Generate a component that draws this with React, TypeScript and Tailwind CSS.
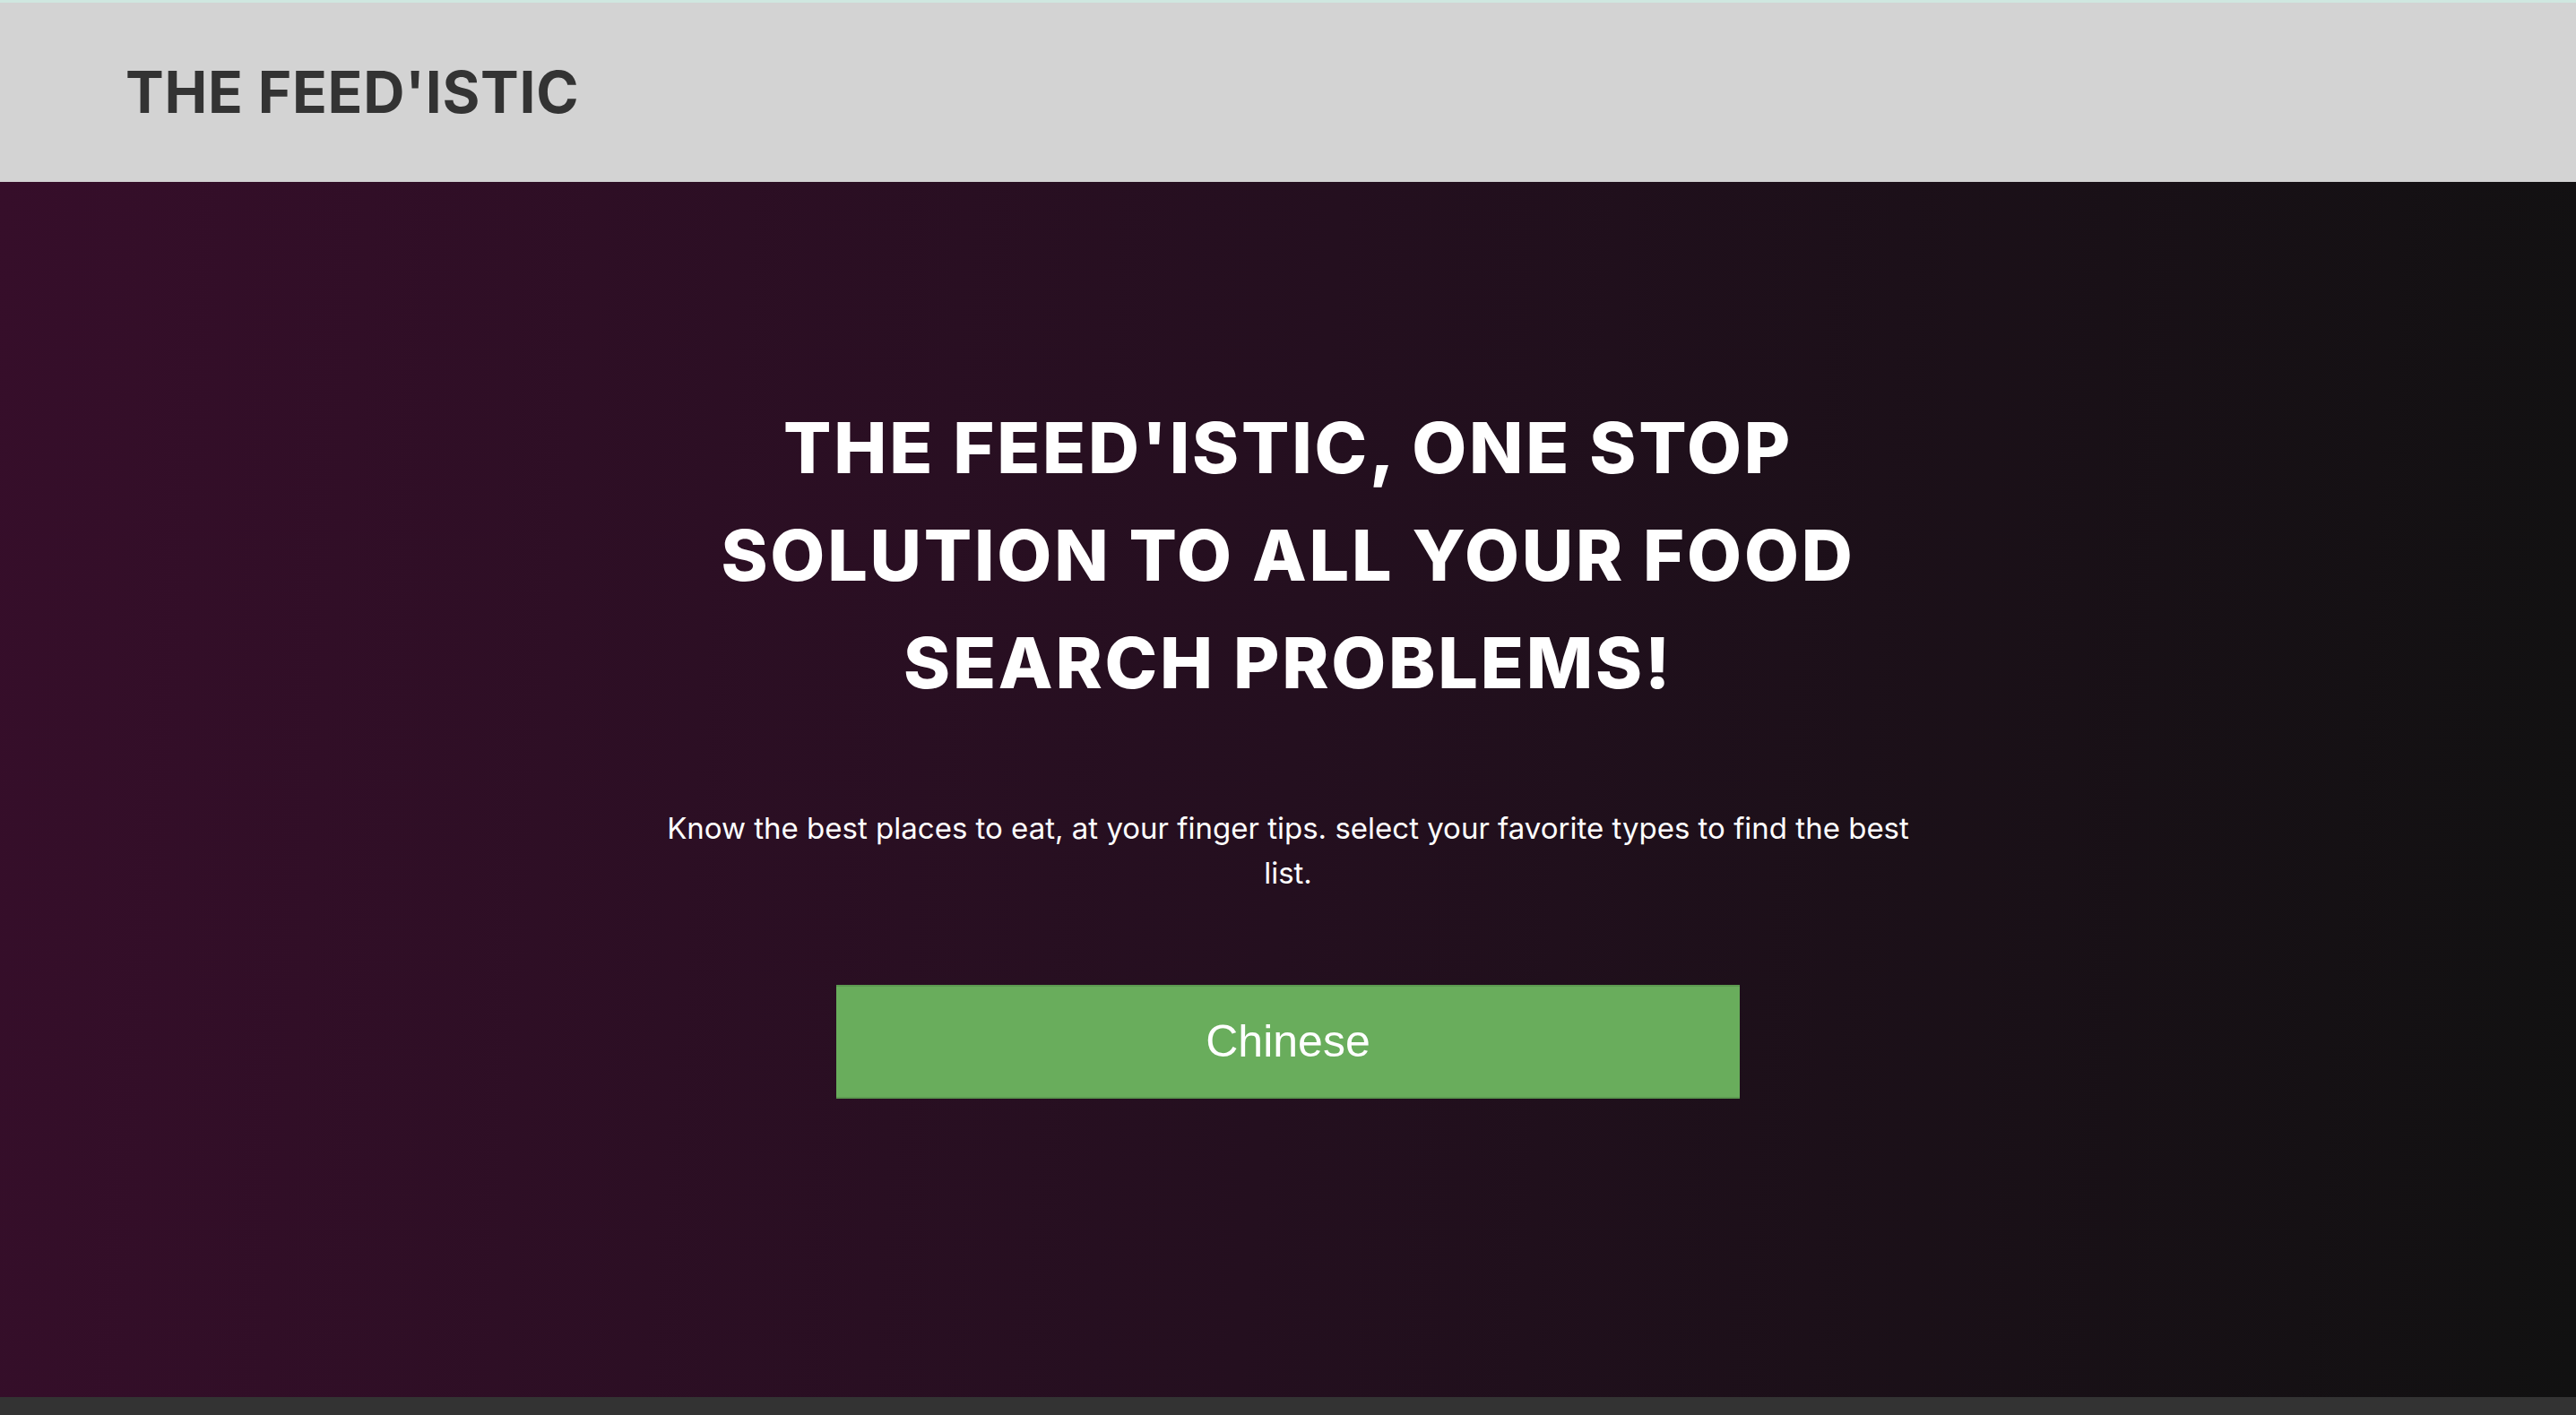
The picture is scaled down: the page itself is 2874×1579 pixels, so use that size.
import React from "react";

export default function App() {
  return (
    <div className="flex min-h-screen flex-col bg-[#333333] font-['Inter',sans-serif]">
      <header className="flex h-[203px] items-center border-t-[3px] border-[#cfe7e0] bg-[#d3d3d3] px-[140px]">
        <h1 className="text-[64px] font-bold tracking-[0.012em] text-[#333333]">THE FEED'ISTIC</h1>
      </header>
      <main className="flex h-[1356px] flex-col items-center bg-[linear-gradient(95deg,#360e2a_0%,#240f1f_50%,#111111_100%)] pt-[236px] text-white">
        <h2 className="w-[1320px] text-center text-[79px] font-extrabold leading-[120px] tracking-[0.035em]">
          THE FEED'ISTIC, ONE STOP SOLUTION TO ALL YOUR FOOD SEARCH PROBLEMS!
        </h2>
        <p className="mt-[100px] w-[1420px] text-center text-[33px] leading-[50px]">
          Know the best places to eat, at your finger tips. select your favorite types to find the best list.
        </p>
        <button className="mt-[100px] flex h-[127px] w-[1008px] items-center justify-center border-y-2 border-[#5c9a50] bg-[#69ad5c] font-['Liberation_Sans',Arial,sans-serif] text-[50px] text-white">
          Chinese
        </button>
      </main>
      <footer className="h-[20px] bg-[#333333]" />
    </div>
  );
}
